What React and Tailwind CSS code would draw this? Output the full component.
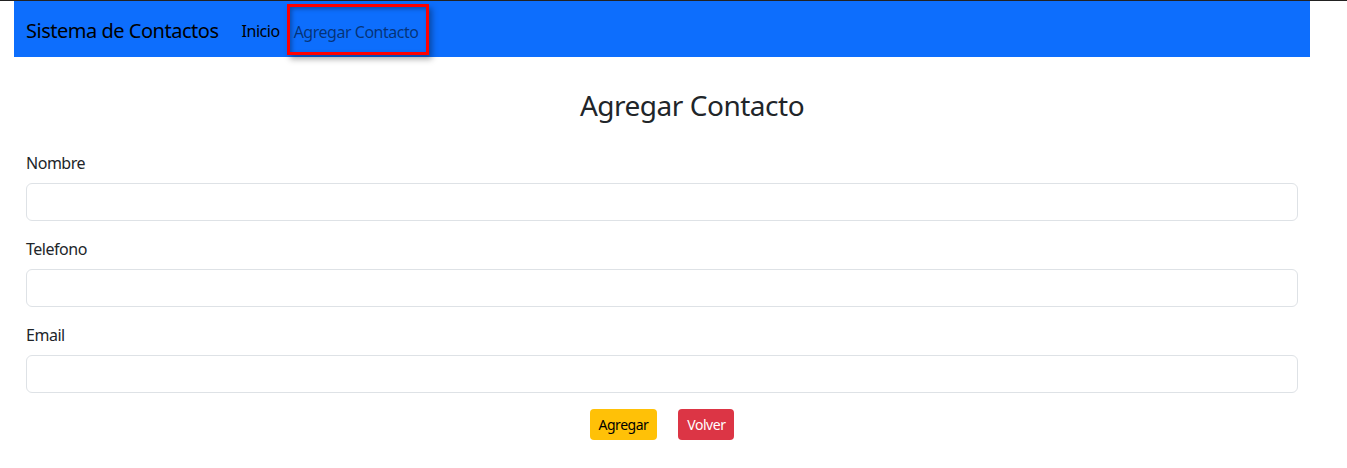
export default function App() {
  const fields = ["Nombre", "Telefono", "Email"];
  return (
    <div
      className="min-h-[468px] bg-white border-t border-[#222222] text-[#212529] tracking-[-0.03em]"
      style={{ fontFamily: '"Noto Sans", "Open Sans", sans-serif' }}
    >
      <nav className="ml-[14px] w-[1296px] h-[56px] bg-[#0d6efd] flex items-center px-3">
        <span className="text-[20px] leading-[30px] text-black mr-[15px] pt-1">Sistema de Contactos</span>
        <a className="text-[16px] leading-6 text-black px-2 pt-1">Inicio</a>
        <a className="ml-[-1px] mt-[1px] h-[51px] flex items-center border-[3px] border-[#ff0000] pl-[4px] pr-[8px] pt-1 text-[16px] text-[rgba(0,0,0,0.55)] shadow-[inset_2px_2px_4px_rgba(0,0,0,0.3),3px_4px_6px_rgba(0,0,0,0.35)]">
          Agregar Contacto
        </a>
      </nav>
      <main className="ml-[14px] w-[1296px] px-3">
        <h3 className="text-center text-[28px] leading-[34px] mt-[31px] mb-[29px] pl-[60px] font-normal">Agregar Contacto</h3>
        <form>
          {fields.map((f) => (
            <div key={f} className="mb-4">
              <label className="block text-[16px] leading-6 mb-2">{f}</label>
              <input
                type="text"
                className="block w-full h-[38px] border border-[#dee2e6] rounded-[6px] px-3 outline-none"
              />
            </div>
          ))}
          <div className="flex justify-center gap-[21px]">
            <button type="button" className="h-[31px] px-[9px] rounded-[4px] bg-[#ffc107] text-black text-[14px]">
              Agregar
            </button>
            <button type="button" className="h-[31px] px-[9px] rounded-[4px] bg-[#dc3545] text-white text-[14px]">
              Volver
            </button>
          </div>
        </form>
      </main>
    </div>
  );
}
